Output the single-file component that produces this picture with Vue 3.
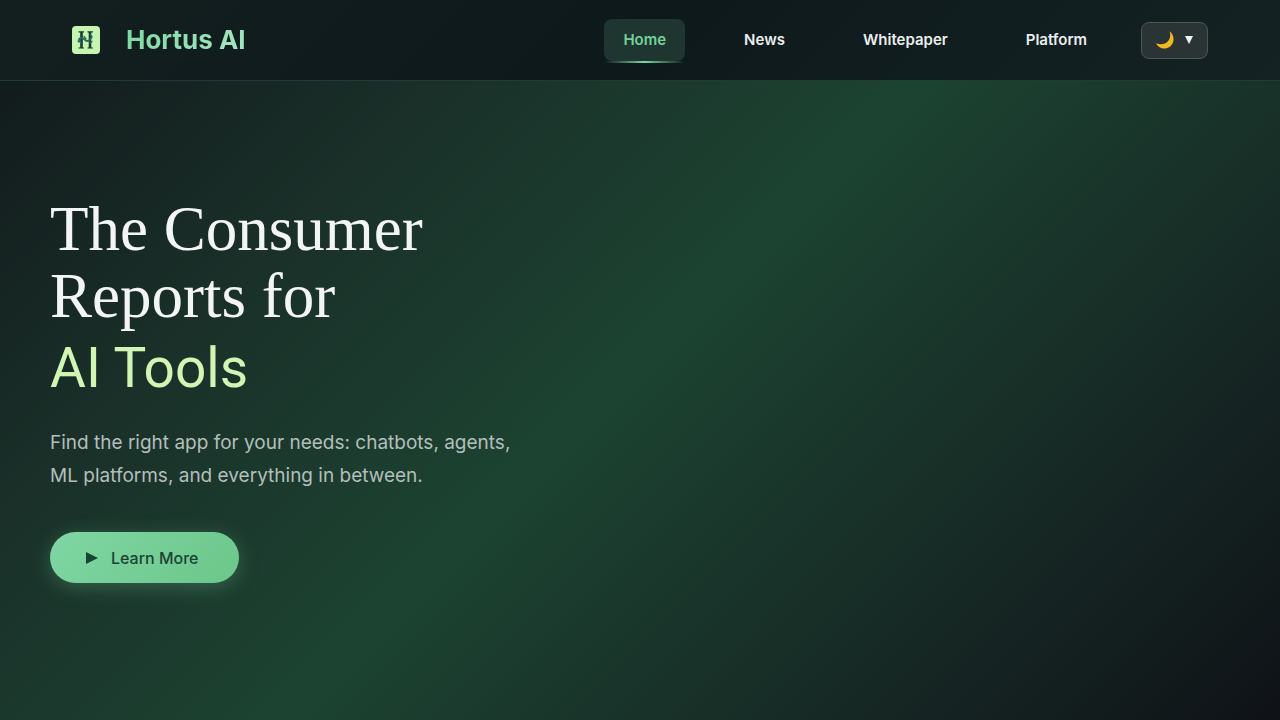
<script setup>
const links = [
  { label: 'Home', active: true },
  { label: 'News' },
  { label: 'Whitepaper' },
  { label: 'Platform' },
]
</script>

<template>
  <div class="page">
    <header class="bar">
      <a class="brand" href="#" aria-label="Hortus AI">
        <svg class="logo" viewBox="0 0 28 28" aria-hidden="true">
          <rect width="28" height="28" rx="4" fill="#c5f5ae" />
          <g fill="none" stroke="#173b30">
            <path d="M9.5 6V22M18 6V22" stroke-width="2.6" />
            <path d="M6.5 5.8H12M15.5 5.8H21M6.5 22H12M15.5 22H21" stroke-width="1.2" />
          </g>
          <g fill="none" stroke="#2a6b5e" stroke-linecap="round">
            <path d="M6.5 15.5C7.5 10.5 10 11 12.5 13.5S17 15.5 19.5 11.5" stroke-width="1.8" />
            <path d="M12 10.5L14 13M18 8.5L20 10.5M7 15L9 17M18 17L20 15.5" stroke-width="1.3" />
          </g>
        </svg>
        <span class="name">Hortus AI</span>
      </a>
      <nav class="nav" aria-label="Main">
        <a v-for="l in links" :key="l.label" href="#" class="link" :class="{ active: l.active }">{{ l.label }}</a>
      </nav>
      <button class="theme" type="button" aria-label="Choose theme">
        <svg class="moon" viewBox="0 0 20 20" aria-hidden="true">
          <path d="M14.6 1.2C21 6.5 19.2 15.6 12.2 18C7.4 19.6 2.9 17.3 1 13.2C10.2 17 17.5 10.2 14.6 1.2Z" fill="#f2b824" />
        </svg>
        <svg class="caret" viewBox="0 0 8 8" aria-hidden="true"><path d="M0 0H8L4 8Z" fill="#f0f2f2" /></svg>
      </button>
    </header>
    <main class="hero">
      <h1>The Consumer<br />Reports for<br /><span>AI Tools</span></h1>
      <p>Find the right app for your needs: chatbots, agents,<br />ML platforms, and everything in between.</p>
      <button class="cta" type="button">
        <svg viewBox="0 0 12 12" aria-hidden="true"><path d="M0 0L12 6L0 12Z" fill="#1b4332" /></svg>
        Learn More
      </button>
    </main>
  </div>
</template>

<style>
body { margin: 0; background: #0f1217; }
</style>

<style scoped>
.page {
  min-height: 100vh;
  display: flex;
  flex-direction: column;
  box-sizing: border-box;
  font-family: Inter, "Liberation Sans", sans-serif;
  background: linear-gradient(135deg, #10171a 0%, #1a3029 26%, #1c4331 50%, #172b26 75%, #0f1217 100%);
}
.bar {
  display: flex;
  align-items: center;
  height: 80px;
  padding: 0 72px;
  background: linear-gradient(135deg, rgba(20, 31, 32, 0.95) 0%, rgba(13, 23, 26, 0.95) 50%, rgba(20, 33, 34, 0.95) 100%);
  border-bottom: 1px solid #213c35;
}
.brand {
  display: flex;
  align-items: center;
  gap: 26px;
  text-decoration: none;
}
.logo { width: 28px; height: 28px; }
.name {
  font-size: 26px;
  line-height: 32px;
  font-weight: 700;
  white-space: nowrap;
  color: transparent;
  background: linear-gradient(135deg, #7dd8a0, #a8e6c4);
  background-clip: text;
}
.nav {
  display: flex;
  gap: 40px;
  margin-left: auto;
}
.link {
  position: relative;
  padding: 11px 19px;
  border-radius: 8px;
  font-size: 15px;
  line-height: 20px;
  font-weight: 600;
  text-decoration: none;
  color: #ebedee;
}
.active {
  color: #74d29a;
  background: #1f352f;
}
.active::after {
  content: "";
  position: absolute;
  left: 0;
  right: 0;
  bottom: -2px;
  height: 2px;
  background: linear-gradient(90deg, transparent, #7dd8a0, transparent);
}
.theme {
  display: flex;
  align-items: center;
  gap: 10px;
  height: 37px;
  margin-left: 35px;
  padding: 0 14px 0 13px;
  border: 1px solid #4c5657;
  border-radius: 8px;
  background: #2a3435;
}
.moon { width: 20px; height: 20px; }
.caret { width: 8px; height: 8px; }
.hero {
  flex: 1;
  display: flex;
  flex-direction: column;
  align-items: flex-start;
  justify-content: center;
  padding: 0 50px 22px;
}
h1 {
  margin: 0;
  font-family: "Liberation Serif", serif;
  font-size: 63px;
  line-height: 67px;
  font-weight: 400;
  color: #f3f5f5;
}
h1 span {
  font-family: Roboto, "Liberation Sans", sans-serif;
  font-size: 55px;
  line-height: 76px;
  color: #d3f5b4;
}
p {
  margin: 20px 0 40px;
  font-size: 19px;
  line-height: 33px;
  color: #b3bfbb;
}
.cta {
  display: flex;
  align-items: center;
  gap: 13px;
  height: 51px;
  padding: 0 40px 0 36px;
  border: 0;
  border-radius: 26px;
  font-family: inherit;
  font-size: 16px;
  font-weight: 500;
  color: #1b4332;
  background: linear-gradient(135deg, #7fd6a3, #6cc78a);
  box-shadow: 0 4px 20px rgba(116, 198, 157, 0.3);
}
.cta svg { width: 12px; height: 12px; }
</style>
